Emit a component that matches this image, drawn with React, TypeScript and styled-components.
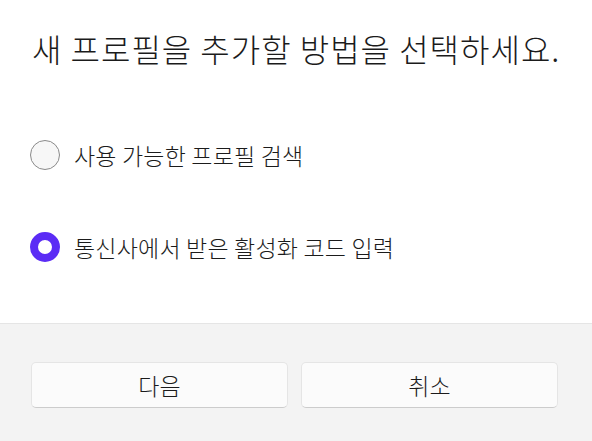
import React, { useState } from "react";
import styled, { createGlobalStyle } from "styled-components";

const GlobalStyle = createGlobalStyle`
    html, body {
        margin: 0;
        padding: 0;
        background: #ffffff;
    }
    body {
        font-family: "Noto Sans CJK KR", "Noto Sans", sans-serif;
        font-weight: 300;
        color: #1b1b1b;
    }
`;

const options = [
    { id: "search", label: "사용 가능한 프로필 검색" },
    { id: "code", label: "통신사에서 받은 활성화 코드 입력" },
];

const App: React.FC = () => {
    const [selected, setSelected] = useState("code");

    return (
        <>
            <GlobalStyle />
            <Dialog>
                <Content>
                    <Title>새 프로필을 추가할 방법을 선택하세요.</Title>
                    <OptionList>
                        {options.map((o) => (
                            <Option key={o.id} onClick={() => setSelected(o.id)}>
                                <Radio $checked={selected === o.id} />
                                <OptionLabel>{o.label}</OptionLabel>
                            </Option>
                        ))}
                    </OptionList>
                </Content>
                <Footer>
                    <Button>다음</Button>
                    <Button>취소</Button>
                </Footer>
            </Dialog>
        </>
    );
};

export default App;

const Dialog = styled.div`
    display: flex;
    flex-direction: column;
    width: 592px;
    height: 441px;
`;

const Content = styled.div`
    flex: 1;
    padding: 26px 0 0 32px;
`;

const Title = styled.h1`
    margin: 0;
    font-size: 32px;
    font-weight: 300;
    letter-spacing: 1px;
    line-height: 44px;
    white-space: nowrap;
`;

const OptionList = styled.div`
    display: flex;
    flex-direction: column;
    row-gap: 62px;
    margin-top: 70px;
`;

const Option = styled.label`
    display: flex;
    align-items: center;
    column-gap: 14px;
    height: 30px;
    margin-left: -2px;
    cursor: pointer;
`;

const Radio = styled.span<{ $checked: boolean }>`
    box-sizing: border-box;
    width: 30px;
    height: 30px;
    border-radius: 50%;
    flex-shrink: 0;
    background: ${(p) => (p.$checked ? "#ffffff" : "#f7f7f7")};
    border: ${(p) => (p.$checked ? "8px solid #5b2cf5" : "1.5px solid #8a8a8a")};
`;

const OptionLabel = styled.span`
    font-size: 23px;
    letter-spacing: 0.2px;
    line-height: 30px;
`;

const Footer = styled.div`
    display: grid;
    grid-template-columns: 257px 257px;
    column-gap: 13px;
    height: 118px;
    box-sizing: border-box;
    padding: 38px 0 0 31px;
    background: #f3f3f3;
    border-top: 1px solid #e5e5e5;
`;

const Button = styled.button`
    height: 46px;
    box-sizing: border-box;
    background: #fbfbfb;
    border: 1px solid #e5e5e5;
    border-bottom-color: #cccccc;
    border-radius: 5px;
    font-family: "Noto Sans CJK KR", "Noto Sans", sans-serif;
    font-weight: 300;
    font-size: 23px;
    color: #1b1b1b;
    padding: 0;
`;
